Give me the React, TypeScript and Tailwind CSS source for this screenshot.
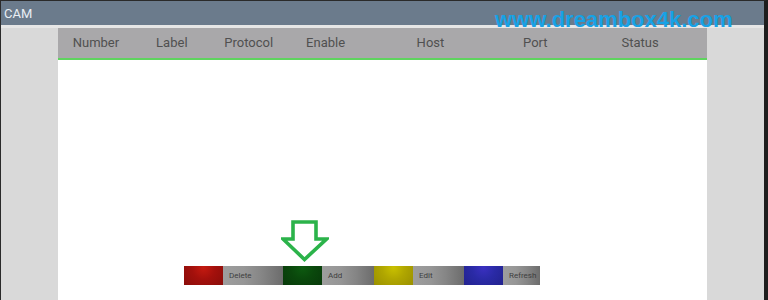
import React from 'react';

const columns = [
    { label: 'Number', w: 'w-[76px]' },
    { label: 'Label', w: 'w-[76px]' },
    { label: 'Protocol', w: 'w-[78px]' },
    { label: 'Enable', w: 'w-[76px]' },
    { label: 'Host', w: 'w-[134px]' },
    { label: 'Port', w: 'w-[76px]' },
    { label: 'Status', w: 'w-[134px]' },
];

const buttons = [
    { label: 'Delete', color: 'bg-[radial-gradient(circle_at_50%_10%,#c41a10_0%,#a3100c_45%,#8a0d0a_100%)]', w: 'w-[60px]' },
    { label: 'Add', color: 'bg-[radial-gradient(circle_at_50%_10%,#0d5a10_0%,#0a480c_45%,#083a0a_100%)]', w: 'w-[52px]' },
    { label: 'Edit', color: 'bg-[radial-gradient(circle_at_50%_10%,#c9c000_0%,#b0a600_45%,#9a9000_100%)]', w: 'w-[51px]' },
    { label: 'Refresh', color: 'bg-[radial-gradient(circle_at_50%_10%,#3a30c0_0%,#2a2aa6_45%,#22228e_100%)]', w: 'w-[37px]' },
];

const App = () => {
    return (
        <div className="relative w-[768px] h-[300px] overflow-hidden bg-[#d9d9d9] border-t border-l border-[#2a2a2a] border-r-4 border-r-[#1e1e1e] flex flex-col font-['Roboto','Liberation_Sans',sans-serif]">
            {/* Title bar */}
            <div className="h-[24px] bg-[#6b7b8c] flex items-center px-[3px] shrink-0">
                <span className="text-[13px] text-[#e8eef4] leading-none">CAM</span>
            </div>
            <div className="h-[3px] bg-[#e6e6e6] shrink-0" />

            {/* Body */}
            <div className="flex-1 flex">
                <div className="w-[57px] shrink-0" />
                <div className="w-[649px] flex flex-col bg-white">
                    <div className="h-[30px] bg-[#a9a8aa] flex items-center shrink-0">
                        {columns.map((c) => (
                            <div key={c.label} className={`${c.w} text-center text-[13px] text-[#505050]`}>
                                {c.label}
                            </div>
                        ))}
                    </div>
                    <div className="h-[2px] bg-[#5ed45e] shrink-0" />
                    <div className="flex-1 flex flex-col justify-end pb-[15px] pl-[126px]">
                        {/* Arrow pointing at Add */}
                        <div className="pl-[97px] mb-[4px]">
                            <svg width="48" height="42" viewBox="0 0 48 42">
                                <path
                                    d="M12 2 H35 V19 H45.5 L23.5 39.5 L2 19 H12 Z"
                                    fill="none"
                                    stroke="#2bb34a"
                                    strokeWidth="3.6"
                                    strokeLinejoin="miter"
                                />
                            </svg>
                        </div>
                        <div className="flex h-[19px] w-fit">
                            {buttons.map((b) => (
                                <React.Fragment key={b.label}>
                                    <div className={`w-[39px] ${b.color}`} />
                                    <div className={`${b.w} flex items-center pl-[6px] bg-[linear-gradient(to_right,#9e9e9e_0%,#969696_35%,#858585_65%,#6c6c6c_100%)]`}>
                                        <span className="text-[8px] text-[#3e3e3e] leading-none">{b.label}</span>
                                    </div>
                                </React.Fragment>
                            ))}
                        </div>
                    </div>
                </div>
                <div className="flex-1" />
            </div>

            {/* Watermark */}
            <div className="absolute left-[494px] top-[8px] text-[22px] font-bold text-[#17a2e6] leading-none font-['Liberation_Sans',sans-serif]">
                www.dreambox4k.com
            </div>
        </div>
    );
};

export default App;
